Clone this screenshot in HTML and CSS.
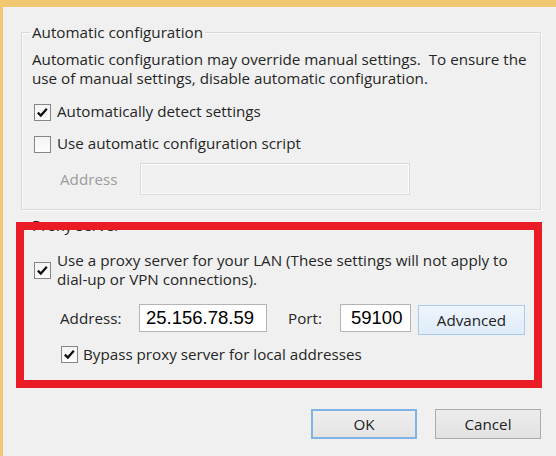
FILE: index.html
```html
<!DOCTYPE html>
<html lang="en">
<head>
<meta charset="utf-8">
<title>Local Area Network (LAN) Settings</title>
<link rel="stylesheet" href="styles.css">
</head>
<body>
<div class="window">
  <fieldset class="group group-auto">
    <legend>Automatic configuration</legend>
    <p class="desc">Automatic configuration may override manual settings.&nbsp; To ensure the<br>use of manual settings, disable automatic configuration.</p>
    <label class="check row-detect">
      <span class="box"><svg viewBox="0 0 17 17" width="15" height="15"><path d="M3.2 8.6 L6.6 12 L13.4 4.2" fill="none" stroke="#111" stroke-width="2.6"/></svg></span>
      <span class="check-text">Automatically detect settings</span>
    </label>
    <label class="check row-script">
      <span class="box"></span>
      <span class="check-text">Use automatic configuration script</span>
    </label>
    <div class="field-row script-addr">
      <span class="lbl lbl-disabled lbl-script">Address</span>
      <input class="input input-disabled input-script" type="text" disabled>
    </div>
  </fieldset>

  <fieldset class="group group-proxy">
    <legend>Proxy server</legend>
    <label class="check check-center row-proxy">
      <span class="box"><svg viewBox="0 0 17 17" width="15" height="15"><path d="M3.2 8.6 L6.6 12 L13.4 4.2" fill="none" stroke="#111" stroke-width="2.6"/></svg></span>
      <span class="check-text">Use a proxy server for your LAN (These settings will not apply to<br>dial-up or VPN connections).</span>
    </label>
    <div class="field-row proxy-row">
      <span class="lbl lbl-address">Address:</span>
      <input class="input input-address" type="text" value="25.156.78.59" readonly>
      <span class="lbl lbl-port">Port:</span>
      <input class="input input-port" type="text" value="59100" readonly>
      <button class="btn btn-advanced" type="button">Advanced</button>
    </div>
    <label class="check check-center row-bypass">
      <span class="box"><svg viewBox="0 0 17 17" width="15" height="15"><path d="M3.2 8.6 L6.6 12 L13.4 4.2" fill="none" stroke="#111" stroke-width="2.6"/></svg></span>
      <span class="check-text">Bypass proxy server for local addresses</span>
    </label>
  </fieldset>

  <div class="actions">
    <button class="btn btn-default" type="button">OK</button>
    <button class="btn" type="button">Cancel</button>
  </div>

  <div class="highlight"></div>
</div>
</body>
</html>
```

FILE: styles.css
```css
* {
  box-sizing: border-box;
}

body {
  margin: 0;
  background: #f0f0f0;
  font-family: "Open Sans", "Noto Sans", sans-serif;
  font-size: 15.2px;
  line-height: 19px;
  color: #262626;
}

.window {
  position: relative;
  height: 456px;
  overflow: hidden;
  background: #f0f0f0;
  border-top: 7px solid #f1c76f;
  border-left: 3px solid #f1c76f;
  padding: 16px 15px 0 18px;
}

.group {
  margin: 0;
  min-width: 0;
  border: 1px solid #d9d9d9;
  box-shadow: inset 1px 1px 0 #fafafa, 1px 1px 0 #fafafa;
  padding: 8px 10px 14px 10px;
}

.group legend {
  padding: 0 2px;
  margin-left: -2px;
  line-height: 19px;
  color: #262626;
}

.group-proxy {
  margin-top: 6px;
  padding-top: 16px;
  padding-bottom: 20px;
}

.desc {
  margin: 0;
  white-space: nowrap;
}

.check {
  display: flex;
  align-items: flex-start;
  white-space: nowrap;
}

.check-center {
  align-items: center;
}

.box {
  flex: none;
  width: 17px;
  height: 17px;
  margin: 2px 6px 0 2px;
  border: 1px solid #868686;
  background: linear-gradient(#f4f4f4, #fdfdfd);
  display: flex;
  align-items: center;
  justify-content: center;
}

.check-center .box {
  margin-top: 0;
}

.row-detect {
  margin-top: 14px;
}

.row-script {
  margin-top: 13px;
}

.field-row {
  display: flex;
  align-items: center;
}

.script-addr {
  margin-top: 10px;
}

.lbl {
  flex: none;
  margin-left: 28px;
  white-space: nowrap;
}

.lbl-disabled {
  color: #9c9c9c;
}

.lbl-script {
  width: 80px;
}

.input {
  flex: none;
  margin: 0;
  border: 1px solid #b4b4b4;
  background: #fff;
  font-family: "Liberation Sans", Arial, sans-serif;
  font-size: 18.5px;
  color: #000;
  outline: none;
  padding: 0 0 0 6px;
}

.input-disabled {
  border-color: #dadada;
  background: #f0f0f0;
  box-shadow: inset 0 0 0 1px #fbfbfb;
}

.input-script {
  width: 270px;
  height: 32px;
}

.proxy-row {
  margin-top: 15px;
  align-items: flex-start;
  height: 31px;
}

.proxy-row .lbl {
  align-self: center;
  margin-top: -2px;
}

.lbl-address {
  width: 79px;
}

.input-address {
  width: 128px;
  height: 28px;
}

.lbl-port {
  margin-left: 21px;
  width: 52px;
}

.input-port {
  width: 71px;
  height: 28px;
  padding-left: 10px;
}

.btn {
  flex: none;
  margin: 0;
  width: 106px;
  height: 30px;
  padding: 0;
  font-family: "Open Sans", "Noto Sans", sans-serif;
  font-size: 15.2px;
  color: #222;
  border: 1px solid #acacac;
  background: linear-gradient(#ececec, #e2e2e2);
}

.btn-advanced {
  width: 107px;
  margin: 1px 0 0 7px;
  border-color: #a9cbec;
  background: linear-gradient(#eef5fc, #dfecf9);
}

.btn-default {
  border: 2px solid #7fb3e6;
  background: linear-gradient(#eeeeee, #e4e4e4);
}

.row-bypass {
  margin-top: 10px;
}

.row-bypass .box {
  margin-left: 29px;
  margin-right: 5px;
}

.actions {
  display: flex;
  justify-content: flex-end;
  gap: 18px;
  margin-top: 24px;
}

.highlight {
  position: absolute;
  left: 13px;
  top: 215px;
  width: 526px;
  height: 166px;
  border: 8px solid #eb1b26;
}
```
